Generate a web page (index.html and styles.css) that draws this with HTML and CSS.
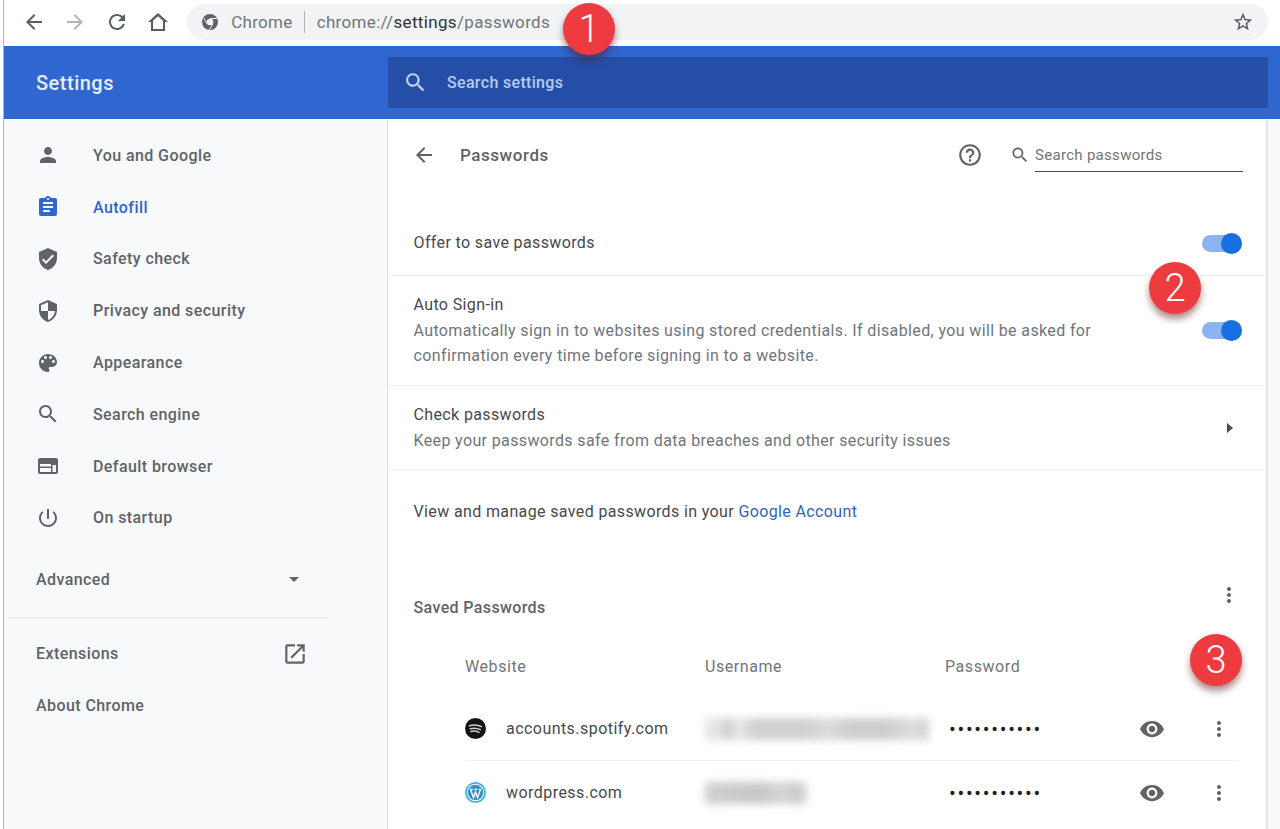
FILE: index.html
```html
<!DOCTYPE html>
<html lang="en">
<head>
<meta charset="utf-8">
<title>Settings - Passwords</title>
<link rel="stylesheet" href="styles.css">
</head>
<body>
<svg class="defs" width="0" height="0" aria-hidden="true">
  <symbol id="i-person" viewBox="0 0 24 24"><path d="M12 12c2.21 0 4-1.79 4-4s-1.79-4-4-4-4 1.79-4 4 1.79 4 4 4zm0 2c-2.67 0-8 1.34-8 4v2h16v-2c0-2.66-5.33-4-8-4z"/></symbol>
  <symbol id="i-assign" viewBox="0 0 24 24"><path d="M19 3h-4.18C14.4 1.84 13.3 1 12 1c-1.3 0-2.4.84-2.82 2H5c-1.1 0-2 .9-2 2v14c0 1.1.9 2 2 2h14c1.1 0 2-.9 2-2V5c0-1.1-.9-2-2-2zm-7 0c.55 0 1 .45 1 1s-.45 1-1 1-1-.45-1-1 .45-1 1-1zm2 14H7v-2h7v2zm3-4H7v-2h10v2zm0-4H7V7h10v2z"/></symbol>
  <symbol id="i-verified" viewBox="0 0 24 24"><path d="M12 1L3 5v6c0 5.55 3.84 10.74 9 12 5.16-1.26 9-6.45 9-12V5l-9-4zm-2 16l-4-4 1.41-1.41L10 14.17l6.59-6.59L18 9l-8 8z"/></symbol>
  <symbol id="i-security" viewBox="0 0 24 24"><path d="M12 1L3 5v6c0 5.55 3.84 10.74 9 12 5.16-1.26 9-6.45 9-12V5l-9-4zm0 10.99h7c-.53 4.12-3.28 7.79-7 8.94V12H5V6.3l7-3.11v8.8z"/></symbol>
  <symbol id="i-palette" viewBox="0 0 24 24"><path d="M12 3c-4.97 0-9 4.03-9 9s4.03 9 9 9c.83 0 1.5-.67 1.5-1.5 0-.39-.15-.74-.39-1.01-.23-.26-.38-.61-.38-.99 0-.83.67-1.5 1.5-1.5H16c2.76 0 5-2.24 5-5 0-4.42-4.03-8-9-8zm-5.5 9c-.83 0-1.5-.67-1.5-1.5S5.67 9 6.5 9 8 9.67 8 10.5 7.33 12 6.5 12zm3-4C8.67 8 8 7.33 8 6.5S8.67 5 9.5 5s1.5.67 1.5 1.5S10.33 8 9.5 8zm5 0c-.83 0-1.5-.67-1.5-1.5S13.67 5 14.5 5s1.5.67 1.5 1.5S15.33 8 14.5 8zm3 4c-.83 0-1.5-.67-1.5-1.5S16.67 9 17.5 9s1.5.67 1.5 1.5-.67 1.5-1.5 1.5z"/></symbol>
  <symbol id="i-search" viewBox="0 0 24 24"><path d="M15.5 14h-.79l-.28-.27C15.41 12.59 16 11.11 16 9.5 16 5.91 13.09 3 9.5 3S3 5.91 3 9.5 5.91 16 9.5 16c1.61 0 3.09-.59 4.23-1.57l.27.28v.79l5 4.99L20.49 19l-4.99-5zm-6 0C7.01 14 5 11.99 5 9.5S7.01 5 9.5 5 14 7.01 14 9.5 11.99 14 9.5 14z"/></symbol>
  <symbol id="i-web" viewBox="0 0 24 24"><path d="M20 4H4c-1.1 0-2 .9-2 2v12c0 1.1.9 2 2 2h16c1.1 0 2-.9 2-2V6c0-1.1-.9-2-2-2zM4 18v-4h11v4H4zm16 0h-3.500v-7H20v7zm-5-5.500H4V10h11v2.500z"/></symbol>
  <symbol id="i-power" viewBox="0 0 24 24"><path d="M13 3h-2v10h2V3zm4.830 2.170l-1.420 1.420C17.990 7.860 19 9.810 19 12c0 3.870-3.130 7-7 7s-7-3.130-7-7c0-2.190 1.010-4.140 2.580-5.420L6.170 5.170C4.230 6.820 3 9.260 3 12c0 4.970 4.030 9 9 9s9-4.030 9-9c0-2.740-1.230-5.180-3.170-6.830z"/></symbol>
  <symbol id="i-open" viewBox="0 0 24 24"><path d="M19 19H5V5h7V3H5c-1.110 0-2 .9-2 2v14c0 1.100.89 2 2 2h14c1.100 0 2-.9 2-2v-7h-2v7zM14 3v2h3.590l-9.830 9.830 1.410 1.410L19 6.410V10h2V3h-7z"/></symbol>
  <symbol id="i-help" viewBox="0 0 24 24"><path d="M11 18h2v-2h-2v2zm1-16C6.480 2 2 6.480 2 12s4.480 10 10 10 10-4.480 10-10S17.520 2 12 2zm0 18c-4.410 0-8-3.590-8-8s3.590-8 8-8 8 3.590 8 8-3.590 8-8 8zm0-14c-2.210 0-4 1.790-4 4h2c0-1.100.9-2 2-2s2 .9 2 2c0 2-3 1.750-3 5h2c0-2.250 3-2.500 3-5 0-2.210-1.790-4-4-4z"/></symbol>
  <symbol id="i-back" viewBox="0 0 24 24"><path d="M20 11H7.830l5.590-5.590L12 4l-8 8 8 8 1.410-1.410L7.830 13H20v-2z"/></symbol>
  <symbol id="i-forward" viewBox="0 0 24 24"><path d="M4 11h12.170l-5.590-5.590L12 4l8 8-8 8-1.410-1.410L16.170 13H4v-2z"/></symbol>
  <symbol id="i-refresh" viewBox="0 0 24 24"><path d="M17.650 6.350C16.200 4.900 14.210 4 12 4c-4.420 0-7.990 3.580-7.990 8s3.570 8 7.990 8c3.730 0 6.840-2.550 7.730-6h-2.080c-.82 2.330-3.040 4-5.650 4-3.310 0-6-2.690-6-6s2.690-6 6-6c1.660 0 3.140.69 4.220 1.780L13 11h7V4l-2.350 2.350z"/></symbol>
  <symbol id="i-home" viewBox="0 0 24 24"><path d="M12 3L2 12h3v9h14v-9h3L12 3zm0 3.200l5 4.500V19H7v-8.300l5-4.500z"/></symbol>
  <symbol id="i-star" viewBox="0 0 24 24"><path d="M22 9.240l-7.190-.62L12 2 9.190 8.630 2 9.240l5.460 4.730L5.820 21 12 17.270 18.180 21l-1.630-7.030L22 9.240zM12 15.400l-3.760 2.270 1-4.280-3.320-2.880 4.380-.38L12 6.100l1.710 4.040 4.380.38-3.320 2.880 1 4.280L12 15.400z"/></symbol>
  <symbol id="i-eye" viewBox="0 0 24 24"><path d="M12 4.500C7 4.500 2.730 7.610 1 12c1.730 4.390 6 7.500 11 7.500s9.270-3.110 11-7.500c-1.730-4.390-6-7.500-11-7.500zM12 17c-2.760 0-5-2.240-5-5s2.240-5 5-5 5 2.240 5 5-2.240 5-5 5zm0-8c-1.660 0-3 1.340-3 3s1.340 3 3 3 3-1.340 3-3-1.340-3-3-3z"/></symbol>
  <symbol id="i-more" viewBox="0 0 24 24"><path d="M12 8c1.100 0 2-.9 2-2s-.9-2-2-2-2 .9-2 2 .9 2 2 2zm0 2c-1.100 0-2 .9-2 2s.9 2 2 2 2-.9 2-2-.9-2-2-2zm0 6c-1.100 0-2 .9-2 2s.9 2 2 2 2-.9 2-2-.9-2-2-2z"/></symbol>
</svg>

<div class="page">
  <header class="toolbar">
    <svg class="tool"><use href="#i-back"/></svg>
    <svg class="tool tool-off"><use href="#i-forward"/></svg>
    <svg class="tool"><use href="#i-refresh"/></svg>
    <svg class="tool"><use href="#i-home"/></svg>
    <div class="omnibox">
      <svg class="chrome-logo" viewBox="0 0 16 16">
        <circle cx="8" cy="8" r="8" fill="#5f6368"/>
        <circle cx="8" cy="8" r="3.300" fill="#f1f3f4"/>
        <path d="M8 4.500h7M5 9.700L1.500 3.800M10.900 9.800L7.300 15.800" stroke="#f1f3f4" stroke-width="1"/>
      </svg>
      <span class="omni-chrome">Chrome</span>
      <span class="omni-sep"></span>
      <span class="omni-url">chrome://<b>settings</b>/passwords</span>
      <svg class="omni-star"><use href="#i-star"/></svg>
    </div>
  </header>

  <div class="bluebar">
    <div class="brand">Settings</div>
    <div class="searchbox">
      <svg class="searchbox-icon"><use href="#i-search"/></svg>
      <span>Search settings</span>
    </div>
  </div>

  <div class="content">
    <nav class="sidebar">
      <a class="nav"><svg class="nav-icon"><use href="#i-person"/></svg>You and Google</a>
      <a class="nav nav-active"><svg class="nav-icon"><use href="#i-assign"/></svg>Autofill</a>
      <a class="nav"><svg class="nav-icon"><use href="#i-verified"/></svg>Safety check</a>
      <a class="nav"><svg class="nav-icon"><use href="#i-security"/></svg>Privacy and security</a>
      <a class="nav"><svg class="nav-icon"><use href="#i-palette"/></svg>Appearance</a>
      <a class="nav"><svg class="nav-icon"><use href="#i-search"/></svg>Search engine</a>
      <a class="nav"><svg class="nav-icon"><use href="#i-web"/></svg>Default browser</a>
      <a class="nav"><svg class="nav-icon"><use href="#i-power"/></svg>On startup</a>
      <div class="nav-plain nav-advanced">Advanced<span class="caret"></span></div>
      <div class="nav-rule"></div>
      <div class="nav-plain">Extensions<svg class="nav-open"><use href="#i-open"/></svg></div>
      <div class="nav-plain">About Chrome</div>
    </nav>

    <main class="card">
      <div class="card-head">
        <svg class="head-back"><use href="#i-back"/></svg>
        <h1>Passwords</h1>
        <svg class="head-help"><use href="#i-help"/></svg>
        <svg class="head-search"><use href="#i-search"/></svg>
        <div class="head-input">Search passwords</div>
      </div>

      <section class="row row-offer">
        <div class="row-text"><div>Offer to save passwords</div></div>
        <div class="toggle"></div>
      </section>
      <section class="row row-auto">
        <div class="row-text">
          <div>Auto Sign-in</div>
          <div class="sub">Automatically sign in to websites using stored credentials. If disabled, you will be asked for<br>confirmation every time before signing in to a website.</div>
        </div>
        <div class="toggle"></div>
      </section>
      <section class="row row-check">
        <div class="row-text">
          <div>Check passwords</div>
          <div class="sub">Keep your passwords safe from data breaches and other security issues</div>
        </div>
        <span class="chev"></span>
      </section>
      <div class="manage">View and manage saved passwords in your <a>Google Account</a></div>

      <div class="saved-head">
        <h2>Saved Passwords</h2>
        <svg class="saved-more"><use href="#i-more"/></svg>
      </div>

      <div class="table">
        <div class="t-head"><span>Website</span><span>Username</span><span>Password</span></div>
        <div class="t-row t-first">
          <div class="site">
            <svg class="fav" viewBox="0 0 21 21">
              <circle cx="10.500" cy="10.500" r="10.500" fill="#141414"/>
              <path d="M4.500 7.700c4-1.200 8.500-.9 12 1M5.300 10.700c3.500-.9 7-.6 10 1M6 13.400c2.800-.7 5.600-.4 8 .9" fill="none" stroke="#cfcfcf" stroke-width="1.500" stroke-linecap="round"/>
            </svg>
            <span>accounts.spotify.com</span>
          </div>
          <div class="blurred blurred-long"></div>
          <div class="dots">•••••••••••</div>
          <svg class="eye"><use href="#i-eye"/></svg>
          <svg class="more"><use href="#i-more"/></svg>
        </div>
        <div class="t-row">
          <div class="site">
            <svg class="fav" viewBox="0 0 21 21">
              <circle cx="10.500" cy="10.500" r="10.500" fill="#38b6dc"/>
              <circle cx="10.500" cy="10.500" r="8.700" fill="#fff"/>
              <circle cx="10.500" cy="10.500" r="7.800" fill="#3f8fc4"/>
              <path d="M5.500 7.500l3 8 2-5.500 2 5.500 3-8M4.800 7.300h3M9.300 7.300h3M13.800 7.300h2.500" fill="none" stroke="#fff" stroke-width="1.300"/>
            </svg>
            <span>wordpress.com</span>
          </div>
          <div class="blurred blurred-short"></div>
          <div class="dots">•••••••••••</div>
          <svg class="eye"><use href="#i-eye"/></svg>
          <svg class="more"><use href="#i-more"/></svg>
        </div>
      </div>
    </main>
    <div class="gutter"></div>
  </div>

  <div class="badge badge-1">1</div>
  <div class="badge badge-2">2</div>
  <div class="badge badge-3">3</div>
</div>
</body>
</html>
```
FILE: styles.css
```css
* { box-sizing: border-box; }
html, body { margin: 0; height: 100%; overflow: hidden; background: #fff; }
body { font-family: Roboto, "Liberation Sans", sans-serif; font-size: 16px; color: #46494d; }
.defs { position: absolute; }
h1, h2 { margin: 0; font-size: 16px; font-weight: 500; color: #5f6368; }

.page { position: relative; height: 829px; margin-left: 3px; border-left: 1px solid #a6bcbc; display: flex; flex-direction: column; }

.toolbar { height: 46px; flex: none; display: flex; align-items: center; padding: 0 12px 2px 18px; gap: 17.300px; background: #fff; }
.tool { width: 24px; height: 24px; fill: #5a5e62; flex: none; }
.tool-off { fill: #b4b7ba; }
.omnibox { flex: 1; height: 36px; border-radius: 18px; background: #f1f3f4; display: flex; align-items: center; padding: 0 14px 0 15px; font-size: 17px; color: #70757a; }
.chrome-logo { width: 16px; height: 16px; flex: none; }
.omni-chrome { margin-left: 13px; letter-spacing: .3px; }
.omni-sep { width: 1px; height: 22px; background: #b0b3b6; margin: 0 12px 0 11px; }
.omni-url { flex: 1; letter-spacing: .34px; }
.omni-url b { font-weight: 400; color: #303336; }
.omni-star { width: 22px; height: 22px; fill: #55595d; flex: none; }

.bluebar { height: 73px; flex: none; background: #2f66d0; display: flex; align-items: center; padding-right: 12px; }
.brand { width: 383px; padding-left: 32px; font-size: 20px; font-weight: 500; letter-spacing: .5px; color: #e4eefc; }
.searchbox { flex: 1; height: 51px; margin-left: 1px; background: #254fa6; display: flex; align-items: center; padding-left: 15px; color: #b5cbf0; font-weight: 500; letter-spacing: .33px; gap: 19px; }
.searchbox-icon { width: 25px; height: 25px; fill: #c2d4f4; }

.content { flex: 1; display: flex; min-height: 0; background: #f8f9fa; }
.sidebar { width: 383px; flex: none; padding-top: 10.500px; color: #5f6368; font-weight: 500; letter-spacing: .42px; }
.nav { height: 51.800px; display: flex; align-items: center; padding-left: 32px; gap: 33px; }
.nav-icon { width: 24px; height: 24px; fill: #5f6368; flex: none; }
.nav-active { color: #2f66d0; }
.nav-active .nav-icon { fill: #2f66d0; }
.nav-plain { height: 52px; display: flex; align-items: center; padding-left: 32px; position: relative; }
.nav-advanced { margin-top: 10px; }
.caret { margin-left: 179px; width: 0; height: 0; border: 5px solid transparent; border-top: 5px solid #5f6368; border-bottom: 0; }
.nav-rule { height: 1px; margin: 11px 59px 10px 4px; background: #e4e6e8; }
.nav-open { width: 26px; height: 26px; fill: #5f6368; margin-left: 163px; }

.card { width: 881px; flex: none; background: #fff; border-left: 1px solid #dcdfe2; border-right: 2px solid #e2e4e6; letter-spacing: .37px; }
.gutter { flex: 1; }

.card-head { height: 72px; margin-bottom: 20px; display: flex; align-items: center; padding-left: 24px; }
.head-back { width: 24px; height: 24px; fill: #5f6368; flex: none; }
.card-head h1 { margin-left: 24px; width: 497px; font-size: 17px; letter-spacing: .55px; }
.head-help { width: 26px; height: 26px; fill: #5f6368; flex: none; }
.head-search { width: 20px; height: 20px; fill: #5f6368; margin-left: 27px; flex: none; }
.head-input { width: 208px; margin-left: 5px; height: 33px; border-bottom: 1px solid #4a4d50; color: #70757a; font-size: 15px; letter-spacing: .3px; line-height: 33px; }

.row { display: flex; align-items: center; justify-content: space-between; padding: 0 24px 0 25.500px; border-bottom: 1px solid #eceef0; }
.row-offer { height: 65px; }
.row-auto { height: 110px; }
.row-check { height: 84px; }
.row-text { line-height: 25.700px; }
.sub { color: #70757a; }
.toggle { width: 40px; height: 17px; position: relative; border-radius: 9px; background: #8ab4f0; flex: none; }
.toggle::after { content: ""; position: absolute; right: 0; top: -2px; width: 21px; height: 21px; border-radius: 50%; background: #1a6fe0; }
.chev { width: 0; height: 0; margin-right: 9px; border: 5px solid transparent; border-left: 6px solid #4a4d50; border-right: 0; }

.manage { height: 81px; padding: 29px 0 0 25.500px; line-height: 25px; }
.manage a { color: #2f66b8; }

.saved-head { height: 66px; margin-top: 32px; padding: 0 24px 0 25.500px; display: flex; justify-content: space-between; }
.saved-head h2 { padding-top: 12px; line-height: 25px; }
.saved-more { width: 24px; height: 24px; fill: #5f6368; margin-right: 1px; }

.table { margin-left: 77px; margin-right: 27px; }
.t-head { height: 34px; display: grid; grid-template-columns: 240px 240px 1fr; align-items: center; color: #70757a; letter-spacing: .57px; }
.t-row { height: 63px; display: flex; align-items: center; }
.t-first { height: 64px; margin-top: 14px; border-bottom: 1px solid #eceef0; }
.site { width: 240px; display: flex; align-items: center; gap: 20px; letter-spacing: .45px; }
.fav { width: 21px; height: 21px; flex: none; }
.blurred { height: 22px; filter: blur(4px); }
.blurred-long { width: 224px; margin-right: 16px; background: linear-gradient(90deg, #e4e4e4 0 6%, #cfcfcf 10% 12%, #ececec 14%, #d0d0d0 22% 45%, #dcdcdc 55%, #cdcdcd 65% 82%, #dddddd 92%, #d2d2d2 100%); }
.blurred-short { width: 102px; margin-right: 138px; background: linear-gradient(90deg, #cfcfcf, #c6c6c6 55%, #d6d6d6 75%, #c9c9c9 90%, #dadada); }
.dots { width: 180px; padding-left: 4px; color: #1e1e1e; font-size: 20px; line-height: 24px; letter-spacing: 1.700px; }
.eye { width: 26px; height: 26px; fill: #5f6368; margin-left: 14px; flex: none; }
.more { width: 24px; height: 24px; fill: #5f6368; margin-left: 42px; flex: none; }

.badge { position: absolute; width: 52px; height: 52px; border-radius: 50%; background: #ee3b40; color: #fff; font-size: 38px; font-weight: 300; line-height: 52px; text-align: center; box-shadow: 0 5px 7px rgba(90, 20, 20, .5); }
.badge-1 { left: 559px; top: 3px; }
.badge-2 { left: 1145px; top: 262px; }
.badge-3 { left: 1186px; top: 634px; }
```
